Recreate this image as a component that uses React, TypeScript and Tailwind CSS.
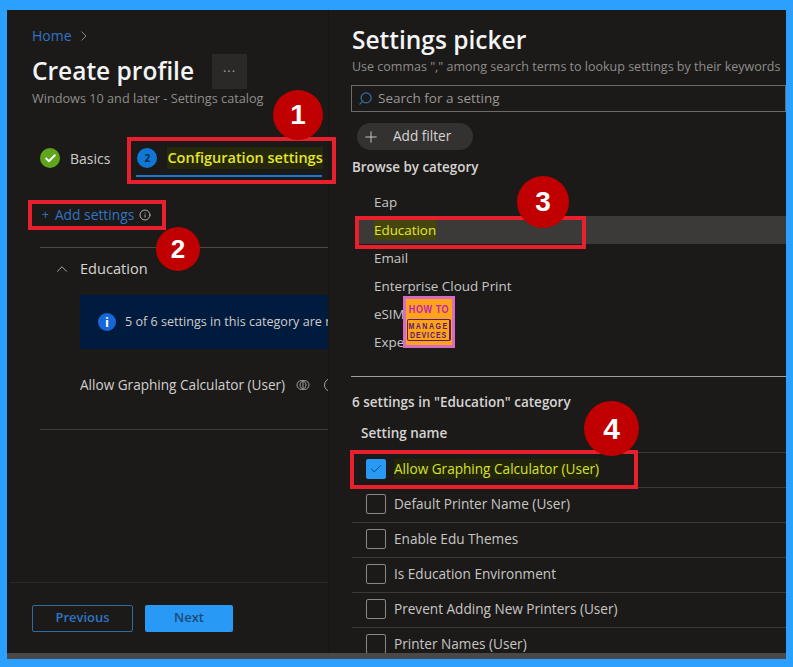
import { Check, ChevronUp, Info, Plus, Search } from 'lucide-react'

const categories = ['Eap', 'Education', 'Email', 'Enterprise Cloud Print', 'eSIM', 'Experience']

const settings = [
  'Allow Graphing Calculator (User)',
  'Default Printer Name (User)',
  'Enable Edu Themes',
  'Is Education Environment',
  'Prevent Adding New Printers (User)',
  'Printer Names (User)',
]

function LeftPane() {
  return (
    <div className="flex h-full w-[322px] shrink-0 flex-col overflow-hidden border-r border-[#161514]">
      <div className="flex items-center gap-2 pl-[25px] pt-[16px] text-[14px] leading-5">
        <span className="text-[#2f74c4]">Home</span>
        <svg width="8" height="12" viewBox="0 0 8 12" fill="none" stroke="#8a8886" strokeWidth="1">
          <path d="M1.500 1.500 6 6l-4.500 4.500" />
        </svg>
      </div>
      <div className="mt-[6px] flex items-center pl-[25px]">
        <h1 className="text-[24.500px] font-semibold leading-[38px] text-[#f4f4f4]">Create profile</h1>
        <div className="ml-[18px] flex h-[35px] w-[35px] items-center justify-center bg-[#2a2928] text-[13px] leading-none tracking-[1px] text-[#a19f9d]">
          ···
        </div>
      </div>
      <p className="pl-[25px] text-[12.700px] leading-4 text-[#8f8d8b]">Windows 10 and later - Settings catalog</p>

      <div className="mt-[36px] flex h-[32px] pl-[33px]">
        <div className="flex items-center">
          <span className="flex h-5 w-5 items-center justify-center rounded-full bg-[#5fa51c]">
            <Check size={13} strokeWidth={3.500} className="text-white" />
          </span>
          <span className="ml-[10px] text-[14px] text-[#cfcdcb]">Basics</span>
        </div>
        <div className="relative ml-[27px] flex items-center">
          <span className="flex h-5 w-5 items-center justify-center rounded-full bg-[#0f78d4] text-[10px] font-bold text-[#0a2a4d]">
            2
          </span>
          <span className="ml-[10px] whitespace-nowrap bg-[#26280c] text-[14.500px] font-semibold text-[#e4e62c]">
            Configuration settings
          </span>
          <span className="absolute -left-[1px] bottom-[-3px] h-[2px] w-[186px] bg-[#1a78cf]" />
        </div>
      </div>

      <div className="ml-[35px] mt-[31px] flex h-5 items-center text-[13.800px] text-[#2f74c4]">
        <span className="mr-[6px] text-[12px]">+</span>
        <span>Add settings</span>
        <Info size={12} className="ml-[5px] text-[#b0aeac]" />
      </div>

      <div className="ml-[33px] mt-[22px] flex h-[42px] items-center border-t border-[#4a4948] pl-[13px] text-[14.600px] text-[#d6d4d2]">
        <ChevronUp size={18} strokeWidth={1.300} className="text-[#b0aeac]" />
        <span className="ml-[9px]">Education</span>
      </div>

      <div className="ml-[73px] mt-[6px] flex h-[54px] items-center overflow-hidden whitespace-nowrap bg-[#001b3d] pl-[18px] text-[12.600px] text-[#cfcdcb]">
        <span className="mr-[9px] flex h-[18px] w-[18px] shrink-0 items-center justify-center rounded-full bg-[#1668d8] text-[13px] font-bold leading-none text-white">
          i
        </span>
        5 of 6 settings in this category are not selected
      </div>

      <div className="ml-[73px] mt-[26px] flex h-[20px] items-center overflow-hidden whitespace-nowrap text-[13.600px] font-medium text-[#d2d0ce]">
        <span>Allow Graphing Calculator (User)</span>
        <svg className="ml-[11px] shrink-0" width="14" height="14" viewBox="0 0 14 14" fill="none" stroke="#a19f9d" strokeWidth="1">
          <circle cx="5.500" cy="7" r="4.500" />
          <circle cx="8.500" cy="7" r="4.500" />
          <path d="M7 3v8" />
        </svg>
        <span className="ml-[14px] h-[14px] w-[14px] shrink-0 rounded-full border border-[#a19f9d]" />
      </div>

      <div className="ml-[33px] mt-[34px] border-t border-[#3f3e3d]" />

      <div className="ml-[3px] mt-[152px] flex h-[71px] items-center border-t border-[#2a2928] pl-[22px]">
        <button className="h-[27px] w-[101px] rounded-[2px] border border-[#2e6c9f] text-[13px] font-semibold text-[#2f74c4]">
          Previous
        </button>
        <button className="ml-[12px] h-[27px] w-[88px] rounded-[2px] bg-[#2899f5] text-[13px] font-semibold text-[#1d4a78]">
          Next
        </button>
      </div>
    </div>
  )
}

function RightPane() {
  return (
    <div className="h-full min-w-0 flex-1 overflow-hidden pl-[23px]">
      <h2 className="mt-[11px] text-[24.500px] font-semibold leading-[38px] text-[#f4f4f4]">Settings picker</h2>
      <p className="whitespace-nowrap text-[12.500px] leading-4 text-[#8f8d8b]">
        Use commas "," among search terms to lookup settings by their keywords
      </p>
      <div className="-ml-px mt-[10px] flex h-[27px] items-center border border-[#6b6a69] pl-[6px] text-[13.500px] text-[#9a9896]">
        <Search size={15} className="-scale-x-100 text-[#2f6ea8]" />
        <span className="ml-[5px]">Search for a setting</span>
      </div>
      <div className="ml-[5px] mt-[11px] flex h-[27px] w-[116px] items-center rounded-full bg-[#333231] pl-[5px] text-[13.600px] text-[#d6d4d2]">
        <Plus size={18} strokeWidth={1.200} />
        <span className="ml-[13px]">Add filter</span>
      </div>
      <h3 className="mt-[7px] text-[13.400px] font-semibold leading-[20px] text-[#d6d4d2]">Browse by category</h3>

      <ul className="mt-[11px]">
        {categories.map((c) => (
          <li
            key={c}
            className={
              c === 'Education'
                ? 'ml-[3px] flex h-[28px] items-center bg-[#3b3a39] pl-[19px] text-[13.400px] text-[#e4e62c]'
                : 'flex h-[28px] items-center pl-[22px] text-[13.400px] text-[#c8c6c4]'
            }
          >
            {c === 'Education' ? <span className="bg-[#45460f]">{c}</span> : c}
          </li>
        ))}
      </ul>

      <div className="-ml-px mt-[20px] border-t border-[#a19f9d]" />
      <p className="mt-[15px] text-[13.500px] font-semibold leading-5 text-[#d6d4d2]">
        6 settings in "Education" category
      </p>
      <p className="mt-[11px] flex h-[20px] items-center pl-[9px] text-[13.500px] font-semibold text-[#d6d4d2]">Setting name</p>

      <div className="mt-[9px]">
        {settings.map((s, i) => (
          <div key={s} className="flex h-[35px] items-center border-t border-[#3b3a39] pb-[2px] pl-[14px] text-[13.600px]">
            {i === 0 ? (
              <span className="flex h-5 w-5 items-center justify-center rounded-[2px] bg-[#2899f5]">
                <Check size={14} strokeWidth={1.500} className="text-[#123a63]" />
              </span>
            ) : (
              <span className="h-5 w-5 rounded-[2px] border border-[#8a8886]" />
            )}
            <span className={i === 0 ? 'ml-2 bg-[#23250b] text-[#d8e02c]' : 'ml-2 text-[#c8c6c4]'}>{s}</span>
          </div>
        ))}
      </div>
    </div>
  )
}

function Badge({ n, className }: { n: number; className: string }) {
  return (
    <div
      className={`absolute flex items-center justify-center rounded-full bg-[#c00000] font-['Liberation_Sans',sans-serif] font-bold text-white ${className}`}
    >
      {n}
    </div>
  )
}

function Logo() {
  return (
    <div className="absolute left-[403px] top-[296px] flex h-[52px] w-[52px] flex-col items-center border-[3px] border-[#d66cc0] bg-[#ffa31a] font-['Liberation_Sans',sans-serif] font-bold leading-none">
      <span className="mt-[5px] scale-y-125 whitespace-nowrap text-[9px] leading-[10px] tracking-[0.6px] text-[#c21fb8]">HOW TO</span>
      <div className="mt-[5px] flex w-[44px] flex-col items-center rounded-[2px] border border-[#5a1a6e] border-r-[2px] py-px text-[#5a1a6e]">
        <span className="scale-y-125 text-[7px] leading-[9px] tracking-[1.500px]">MANAGE</span>
        <span className="scale-y-125 text-[7px] leading-[9px] tracking-[0.900px]">DEVICES</span>
      </div>
    </div>
  )
}

export default function App() {
  return (
    <div className="relative h-[667px] w-[793px] overflow-hidden bg-[#2ba0ff] pb-[8px] pl-[7px] pr-[7px] pt-[10px] font-['Open_Sans',sans-serif]">
      <div className="h-[649px] overflow-hidden border-b-[6px] border-[#4a4948] bg-[#1b1a19]">
        <div className="flex h-full">
          <LeftPane />
          <RightPane />
        </div>
      </div>

      <div className="absolute left-[127px] top-[137px] h-[47px] w-[209px] border-[4px] border-[#e81f2d]" />
      <div className="absolute left-[28px] top-[200px] h-[30px] w-[138px] border-[4px] border-[#e81f2d]" />
      <div className="absolute left-[355px] top-[216px] h-[33px] w-[231px] border-[4px] border-[#e81f2d]" />
      <div className="absolute left-[350px] top-[450px] h-[39px] w-[288px] border-[4px] border-[#e81f2d]" />

      <Badge n={1} className="left-[273px] top-[90px] h-[50px] w-[50px] text-[28px]" />
      <Badge n={2} className="left-[156px] top-[227px] h-[44px] w-[44px] text-[26px]" />
      <Badge n={3} className="left-[517px] top-[176px] h-[52px] w-[52px] text-[28px]" />
      <Badge n={4} className="left-[584px] top-[401px] h-[55px] w-[55px] text-[30px]" />

      <Logo />
    </div>
  )
}
